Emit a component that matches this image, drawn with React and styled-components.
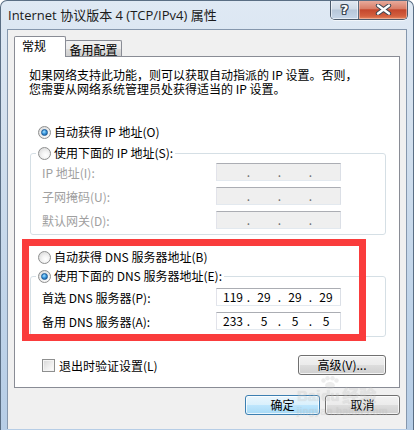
import styled, { createGlobalStyle } from "styled-components";

const GlobalStyle = createGlobalStyle`
  body {
    margin: 0;
    background: #ffffff;
    font-family: "Noto Sans CJK SC", sans-serif;
  }
`;

const App = () => {
  return (
    <>
      <GlobalStyle />
      <Window>
        <TitleBar>
          <Title>Internet 协议版本 4 (TCP/IPv4) 属性</Title>
          <CaptionGroup>
            <HelpButton>?</HelpButton>
            <CloseButton>
              <svg width="17" height="11" viewBox="0 0 17 11">
                <path d="M3 1.5 L14 9.5 M14 1.5 L3 9.5" stroke="#3b4552" strokeWidth="4.4" strokeLinecap="round" />
                <path d="M3 1.5 L14 9.5 M14 1.5 L3 9.5" stroke="#ffffff" strokeWidth="2.4" strokeLinecap="round" />
              </svg>
            </CloseButton>
          </CaptionGroup>
        </TitleBar>

        <Client>
          <TabStrip>
            <Tab $active>常规</Tab>
            <Tab>备用配置</Tab>
          </TabStrip>

          <Panel>
            <Description>
              如果网络支持此功能，则可以获取自动指派的 IP 设置。否则，
              <br />
              您需要从网络系统管理员处获得适当的 IP 设置。
            </Description>

            <OptionRow $top={28}>
              <Radio $checked />
              <span>自动获得 IP 地址(O)</span>
            </OptionRow>

            <Group $top={5} $padTop={2} $padBottom={5}>
              <Legend>
                <OptionRow>
                  <Radio />
                  <span>使用下面的 IP 地址(S):</span>
                </OptionRow>
              </Legend>
              <FieldRow $disabled>
                <FieldLabel>IP 地址(I):</FieldLabel>
                <IpField $disabled values={["", "", "", ""]} />
              </FieldRow>
              <FieldRow $disabled>
                <FieldLabel>子网掩码(U):</FieldLabel>
                <IpField $disabled values={["", "", "", ""]} />
              </FieldRow>
              <FieldRow $disabled>
                <FieldLabel>默认网关(D):</FieldLabel>
                <IpField $disabled values={["", "", "", ""]} />
              </FieldRow>
            </Group>

            <OptionRow $top={14}>
              <Radio />
              <span>自动获得 DNS 服务器地址(B)</span>
            </OptionRow>

            <Group $top={3} $padTop={4} $padBottom={6}>
              <Legend>
                <OptionRow>
                  <Radio $checked />
                  <span>使用下面的 DNS 服务器地址(E):</span>
                </OptionRow>
              </Legend>
              <FieldRow>
                <FieldLabel>首选 DNS 服务器(P):</FieldLabel>
                <IpField values={["119", "29", "29", "29"]} />
              </FieldRow>
              <FieldRow>
                <FieldLabel>备用 DNS 服务器(A):</FieldLabel>
                <IpField values={["233", "5", "5", "5"]} />
              </FieldRow>
            </Group>

            <PanelFooter>
              <CheckRow>
                <CheckBox />
                <span>退出时验证设置(L)</span>
              </CheckRow>
              <Button $w={88}>高级(V)...</Button>
            </PanelFooter>
          </Panel>

          <DialogFooter>
            <Button $w={75} $default>
              确定
            </Button>
            <Button $w={75}>取消</Button>
          </DialogFooter>
        </Client>

        <Highlight />

        <Watermark>
          <WatermarkLogo>
            <span>Bai</span>
            <PawWord>
              <svg width="20" height="13" viewBox="0 0 20 13">
                <circle cx="3.5" cy="4.5" r="2.2" />
                <circle cx="7.5" cy="2.2" r="2.2" />
                <circle cx="12.5" cy="2.2" r="2.2" />
                <circle cx="16.5" cy="4.5" r="2.2" />
                <ellipse cx="10" cy="9.5" rx="4.8" ry="3.4" />
              </svg>
              du
            </PawWord>
            <WatermarkCjk>经验</WatermarkCjk>
          </WatermarkLogo>
          <WatermarkUrl>jingyan.baidu.com</WatermarkUrl>
        </Watermark>
      </Window>
    </>
  );
};
export default App;

const IpField = ({ values, $disabled }) => (
  <IpBox $disabled={$disabled}>
    {values.map((v, i) => (
      <IpPart key={i}>
        <Octet>{v}</Octet>
        {i < 3 && <Dot $disabled={$disabled}>.</Dot>}
      </IpPart>
    ))}
  </IpBox>
);

const Window = styled.div`
  position: relative;
  width: 414px;
  height: 430px;
  box-sizing: border-box;
  border: 1px solid #5a6e84;
  border-bottom: none;
  border-radius: 7px 7px 0 0;
  background: linear-gradient(
    180deg,
    #dfe9f4 0%,
    #d3e0ee 30%,
    #c0d4e9 70%,
    #b6cde6 100%
  );
  display: flex;
  flex-direction: column;
  overflow: hidden;
`;

const TitleBar = styled.div`
  height: 28px;
  display: flex;
  align-items: flex-start;
  padding-left: 7px;
`;

const Title = styled.div`
  padding-top: 5px;
  line-height: 18px;
  font-family: "Open Sans", "Noto Sans CJK SC", sans-serif;
  font-size: 13px;
  color: #1b1b1b;
  white-space: nowrap;
`;

const CaptionGroup = styled.div`
  margin-left: auto;
  margin-right: 5px;
  margin-top: -1px;
  display: flex;
  height: 19px;
  border: 1px solid #4c5b6c;
  border-top: none;
  border-radius: 0 0 5px 5px;
  overflow: hidden;
  box-shadow: 0 1px 0 rgba(255, 255, 255, 0.6);
`;

const HelpButton = styled.div`
  width: 27px;
  display: flex;
  align-items: center;
  justify-content: center;
  border-right: 1px solid #5c6b7d;
  background: linear-gradient(
    180deg,
    #e3eaf2 0%,
    #cfdae6 48%,
    #b6c6d8 52%,
    #c6d6e8 100%
  );
  box-shadow: inset 0 0 0 1px rgba(255, 255, 255, 0.55);
  color: #ffffff;
  font-family: "DejaVu Sans", sans-serif;
  font-weight: bold;
  font-size: 13px;
  line-height: 1;
  text-shadow: 1px 0 0 #3b4552, -1px 0 0 #3b4552, 0 1px 0 #3b4552,
    0 -1px 0 #3b4552, 1px 1px 0 #3b4552, -1px -1px 0 #3b4552,
    1px -1px 0 #3b4552, -1px 1px 0 #3b4552;
`;

const CloseButton = styled.div`
  width: 48px;
  display: flex;
  align-items: center;
  justify-content: center;
  background: linear-gradient(
    180deg,
    #eab0a2 0%,
    #d97e68 45%,
    #c4472d 52%,
    #d4603f 85%,
    #e58a62 100%
  );
  box-shadow: inset 0 0 0 1px rgba(255, 220, 210, 0.45);
`;

const Client = styled.div`
  margin: 0 6px 1px 6px;
  flex: 1;
  box-sizing: border-box;
  border: 1px solid #8597ad;
  border-bottom: none;
  background: #f0f0f0;
  padding: 6px 6px 0 6px;
  display: flex;
  flex-direction: column;
`;

const TabStrip = styled.div`
  display: flex;
  align-items: flex-end;
  height: 20px;
  position: relative;
  z-index: 2;
`;

const Tab = styled.div`
  box-sizing: border-box;
  display: flex;
  align-items: center;
  font-size: 12px;
  color: #000000;
  border: 1px solid #898c95;
  border-bottom: none;
  border-radius: 2px 2px 0 0;
  white-space: nowrap;
  ${(p) =>
    p.$active
      ? `
    width: 52px;
    height: 21px;
    margin-bottom: -1px;
    padding: 0 0 3px 7px;
    background: #ffffff;
    position: relative;
    z-index: 2;
  `
      : `
    width: 57px;
    height: 16px;
    margin-left: -1px;
    justify-content: center;
    padding-top: 1px;
    background: linear-gradient(180deg, #f2f2f2 0%, #ebebeb 50%, #dddddd 51%, #cfcfcf 100%);
  `}
`;

const Panel = styled.div`
  box-sizing: border-box;
  height: 332px;
  border: 1px solid #898c95;
  background: #ffffff;
  padding: 11px 13px 0 15px;
  display: flex;
  flex-direction: column;
  font-size: 12px;
  color: #000000;
`;

const Description = styled.p`
  margin: 0 0 0 -1px;
  line-height: 14px;
  white-space: nowrap;
`;

const OptionRow = styled.div`
  display: flex;
  align-items: center;
  gap: 3px;
  height: 16px;
  margin-top: ${(p) => p.$top || 0}px;
  margin-left: ${(p) => (p.$top ? 8 : 0)}px;
  line-height: 16px;
  white-space: nowrap;
`;

const Radio = styled.span`
  position: relative;
  width: 13px;
  height: 13px;
  box-sizing: border-box;
  border-radius: 50%;
  border: 1px solid #8e8f8f;
  background: radial-gradient(circle at 60% 65%, #ffffff 0%, #f4f4f4 35%, #d2d2d2 100%);
  flex-shrink: 0;
  &::after {
    content: "";
    display: ${(p) => (p.$checked ? "block" : "none")};
    position: absolute;
    left: 2px;
    top: 2px;
    width: 7px;
    height: 7px;
    box-sizing: border-box;
    border-radius: 50%;
    border: 1px solid #1b5a96;
    background: radial-gradient(circle at 40% 35%, #a9e3ff 0%, #3d9ae0 45%, #0d4f8e 100%);
  }
`;

const Group = styled.fieldset`
  margin: ${(p) => p.$top}px 0 0 0;
  min-width: 0;
  border: 1px solid #d5dfe5;
  border-radius: 3px;
  padding: ${(p) => p.$padTop}px 0 ${(p) => p.$padBottom}px 5px;
  display: flex;
  flex-direction: column;
  gap: 6px;
`;

const Legend = styled.legend`
  padding: 0 2px;
  height: 16px;
`;

const FieldRow = styled.div`
  display: flex;
  align-items: center;
  height: 18px;
  padding-left: 6px;
  color: ${(p) => (p.$disabled ? "#a0a0a0" : "#000000")};
  white-space: nowrap;
`;

const FieldLabel = styled.span`
  width: 174px;
`;

const IpBox = styled.div`
  box-sizing: border-box;
  width: 125px;
  height: 18px;
  display: flex;
  align-items: center;
  padding-left: 3px;
  border: 1px solid;
  border-color: #abadb3 #dbdfe6 #e3e9ef #e2e3ea;
  background: ${(p) => (p.$disabled ? "#efefef" : "#ffffff")};
  color: #000000;
`;

const IpPart = styled.div`
  display: flex;
  align-items: center;
`;

const Octet = styled.span`
  width: 26px;
  text-align: center;
  line-height: 16px;
`;

const Dot = styled.span`
  width: 5px;
  text-align: center;
  line-height: 16px;
  color: ${(p) => (p.$disabled ? "#6d6d6d" : "#000000")};
`;

const PanelFooter = styled.div`
  margin-top: 18px;
  height: 20px;
  display: flex;
  align-items: center;
  justify-content: space-between;
`;

const CheckRow = styled.div`
  display: flex;
  align-items: center;
  gap: 4px;
  margin-left: 12px;
  white-space: nowrap;
`;

const CheckBox = styled.span`
  width: 13px;
  height: 13px;
  box-sizing: border-box;
  border: 1px solid #8e8f8f;
  background: linear-gradient(135deg, #d6d6d6 0%, #eeeeee 55%, #ffffff 100%);
  box-shadow: inset 0 0 0 1px #f4f4f4;
`;

const Button = styled.button`
  width: ${(p) => p.$w}px;
  height: 20px;
  padding: 0;
  box-sizing: border-box;
  border: 1px solid ${(p) => (p.$default ? "#3c7fb1" : "#707070")};
  border-radius: 3px;
  background: ${(p) =>
    p.$default
      ? "linear-gradient(180deg, #eaf6fd 0%, #d9f0fc 50%, #bee6fd 51%, #a7d9f5 100%)"
      : "linear-gradient(180deg, #f2f2f2 0%, #ebebeb 50%, #dddddd 51%, #cfcfcf 100%)"};
  box-shadow: inset 0 0 0 1px rgba(255, 255, 255, 0.75);
  font-family: "Noto Sans CJK SC", sans-serif;
  font-size: 12px;
  line-height: 16px;
  color: #000000;
`;

const DialogFooter = styled.div`
  margin-top: 7px;
  display: flex;
  justify-content: flex-end;
  gap: 5px;
`;

const Highlight = styled.div`
  position: absolute;
  left: 21px;
  top: 238px;
  width: 344px;
  height: 102px;
  box-sizing: border-box;
  border: 7px solid #fa3c3c;
  z-index: 5;
  pointer-events: none;
`;

const Watermark = styled.div`
  position: absolute;
  left: 296px;
  top: 375px;
  width: 88px;
  z-index: 6;
  opacity: 0.3;
  color: #c4c4c4;
  fill: #c4c4c4;
  pointer-events: none;
  text-shadow: 0 0 1px #9a9a9a;
`;

const WatermarkLogo = styled.div`
  display: flex;
  align-items: flex-end;
  font-family: "Liberation Sans", sans-serif;
  font-weight: bold;
  font-size: 15px;
  line-height: 16px;
  white-space: nowrap;
`;

const PawWord = styled.span`
  display: flex;
  flex-direction: column;
  align-items: center;
  svg {
    margin-bottom: -1px;
  }
`;

const WatermarkCjk = styled.span`
  margin-left: 2px;
  font-family: "Noto Sans CJK SC", sans-serif;
  font-size: 17px;
  line-height: 18px;
`;

const WatermarkUrl = styled.div`
  margin-top: 2px;
  font-family: "Liberation Sans", sans-serif;
  font-size: 10px;
  line-height: 11px;
  letter-spacing: 0.6px;
  white-space: nowrap;
`;
